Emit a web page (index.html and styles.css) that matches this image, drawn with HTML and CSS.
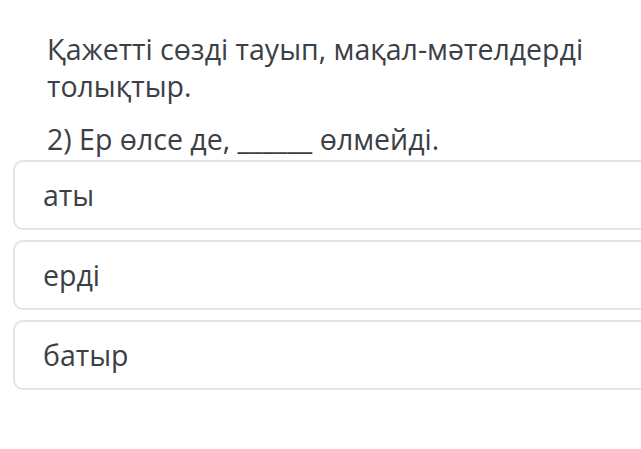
FILE: index.html
```html
<!DOCTYPE html>
<html lang="kk">
<head>
    <meta charset="UTF-8">
    <meta name="viewport" content="width=device-width, initial-scale=1.0">
    <title>Тест</title>
    <link rel="stylesheet" href="styles.css">
</head>
<body>

<div class="question">
    <p class="question-title">Қажетті сөзді тауып, мақал-мәтелдерді толықтыр.</p>
    <p class="question-text">2) Ер өлсе де, ______ өлмейді.</p>
</div>

<div class="answers">
    <div class="answer">аты</div>
    <div class="answer">ерді</div>
    <div class="answer">батыр</div>
</div>

</body>
</html>
```

FILE: styles.css
```css
/* Общие стили */
body {
    margin: 0;
    background-color: #fff;
    font-family: "Open Sans", "Noto Sans", sans-serif;
    color: #3b4046;
    overflow: hidden;
}

.question {
    padding: 31px 40px 0 47px;
}

.question-title {
    margin: 0;
    font-size: 28.5px;
    line-height: 37px;
}

.question-text {
    margin: 16px 0 0;
    font-size: 28.5px;
    line-height: 37px;
}

.answers {
    display: flex;
    flex-direction: column;
    gap: 10px;
    margin: 2px -20px 0 13px;
}

.answer {
    height: 66px;
    border: 2px solid #e3e5e6;
    border-radius: 10px;
    padding: 0 28px;
    display: flex;
    align-items: center;
    font-size: 28.5px;
}
```
